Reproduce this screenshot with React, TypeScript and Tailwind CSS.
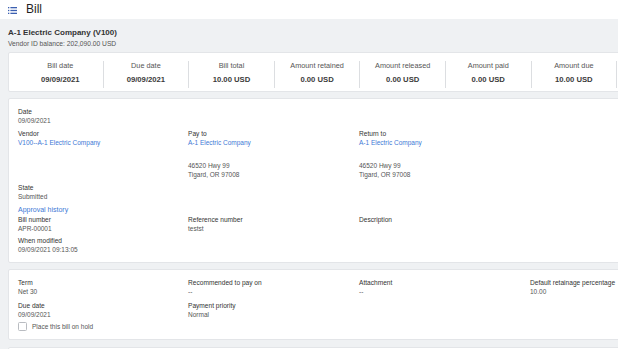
const font = { fontFamily: '"Liberation Sans", Arial, sans-serif' };

function Field({ label, value, link }: { label: string; value?: string; link?: boolean }) {
  return (
    <div>
      <div className="text-[6.6px] leading-[9px] text-[#333]">{label}</div>
      {value !== undefined && (
        <div className={`text-[6.5px] leading-[9px] ${link ? "text-[#4079d6]" : "text-[#555]"}`}>{value}</div>
      )}
    </div>
  );
}

const stats = [
  ["Bill date", "09/09/2021"],
  ["Due date", "09/09/2021"],
  ["Bill total", "10.00 USD"],
  ["Amount retained", "0.00 USD"],
  ["Amount released", "0.00 USD"],
  ["Amount paid", "0.00 USD"],
  ["Amount due", "10.00 USD"],
];

export default function App() {
  return (
    <div className="w-[618px] h-[349px] overflow-hidden bg-[#eff1f3]" style={font}>
      {/* page header */}
      <div className="h-[19px] bg-white flex items-center pl-2">
        <svg width="9" height="7" viewBox="0 0 9 7" className="mt-[1px]">
          <g fill="#3b5fb0">
            <rect x="0" y="0" width="1.3" height="1.3" />
            <rect x="0" y="2.85" width="1.3" height="1.3" />
            <rect x="0" y="5.7" width="1.3" height="1.3" />
            <rect x="2.4" y="0" width="6.6" height="1.3" />
            <rect x="2.4" y="2.85" width="6.6" height="1.3" />
            <rect x="2.4" y="5.7" width="6.6" height="1.3" />
          </g>
        </svg>
        <span className="ml-[9px] text-[12px] leading-[19px] text-[#1f1f1f] font-medium">Bill</span>
      </div>

      <div className="pl-2 pt-[9px]">
        <div className="text-[8px] leading-[10px] font-bold text-[#333]">A-1 Electric Company (V100)</div>
        <div className="mt-[1px] text-[6.7px] leading-[9px] text-[#555]">Vendor ID balance: 202,090.00 USD</div>

        {/* summary */}
        <div className="mt-[4px] w-[612px] bg-white border border-[#e3e5e8] rounded-[2px] pl-[9px] pt-[8px] pb-[3px] flex">
          {stats.map(([label, value]) => (
            <div key={label} className="w-[85.6px] shrink-0 border-r border-[#dcdee1] text-center pb-[3px]">
              <div className="text-[7.3px] leading-[10px] text-[#555]">{label}</div>
              <div className="mt-[4px] text-[7.7px] leading-[10px] font-semibold text-[#3a3a3a]">{value}</div>
            </div>
          ))}
        </div>

        {/* header details */}
        <div className="mt-[6px] w-[612px] bg-white border border-[#e3e5e8] rounded-[2px] pl-[9px] pt-[8px] pb-[8px]">
          <Field label="Date" value="09/09/2021" />
          <div className="mt-[4px] grid grid-cols-[170px_171px_171px]">
            <Field label="Vendor" value="V100--A-1 Electric Company" link />
            <div>
              <Field label="Pay to" value="A-1 Electric Company" link />
              <div className="mt-[14px] text-[6.5px] leading-[9px] text-[#555]">
                <div>46520 Hwy 99</div>
                <div>Tigard, OR 97008</div>
              </div>
            </div>
            <div>
              <Field label="Return to" value="A-1 Electric Company" link />
              <div className="mt-[14px] text-[6.5px] leading-[9px] text-[#555]">
                <div>46520 Hwy 99</div>
                <div>Tigard, OR 97008</div>
              </div>
            </div>
          </div>
          <div className="mt-[4px]">
            <Field label="State" value="Submitted" />
          </div>
          <div className="mt-[4px] text-[7px] leading-[9px] text-[#4079d6]">Approval history</div>
          <div className="mt-[1px] grid grid-cols-[170px_171px_171px]">
            <Field label="Bill number" value="APR-00001" />
            <Field label="Reference number" value="testst" />
            <Field label="Description" />
          </div>
          <div className="mt-[3px]">
            <Field label="When modified" value="09/09/2021 09:13:05" />
          </div>
        </div>

        {/* terms */}
        <div className="mt-[6px] w-[612px] bg-white border border-[#e3e5e8] rounded-[2px] pl-[9px] pt-[8px] pb-[8px]">
          <div className="grid grid-cols-[170px_171px_171px_171px]">
            <div>
              <Field label="Term" value="Net 30" />
              <div className="mt-[5px]">
                <Field label="Due date" value="09/09/2021" />
              </div>
              <label className="mt-[3px] flex items-center h-[9px]">
                <span className="w-[9px] h-[9px] rounded-[1.5px] border border-[#b9bcc1] bg-white" />
                <span className="ml-[5px] text-[6.5px] leading-[9px] text-[#555]">Place this bill on hold</span>
              </label>
            </div>
            <div>
              <Field label="Recommended to pay on" value="--" />
              <div className="mt-[5px]">
                <Field label="Payment priority" value="Normal" />
              </div>
            </div>
            <Field label="Attachment" value="--" />
            <div className="whitespace-nowrap">
              <Field label="Default retainage percentage" value="10.00" />
            </div>
          </div>
        </div>

        <div className="mt-[7px] w-[612px] h-[20px] bg-white border border-[#e3e5e8] rounded-[2px]" />
      </div>
    </div>
  );
}
